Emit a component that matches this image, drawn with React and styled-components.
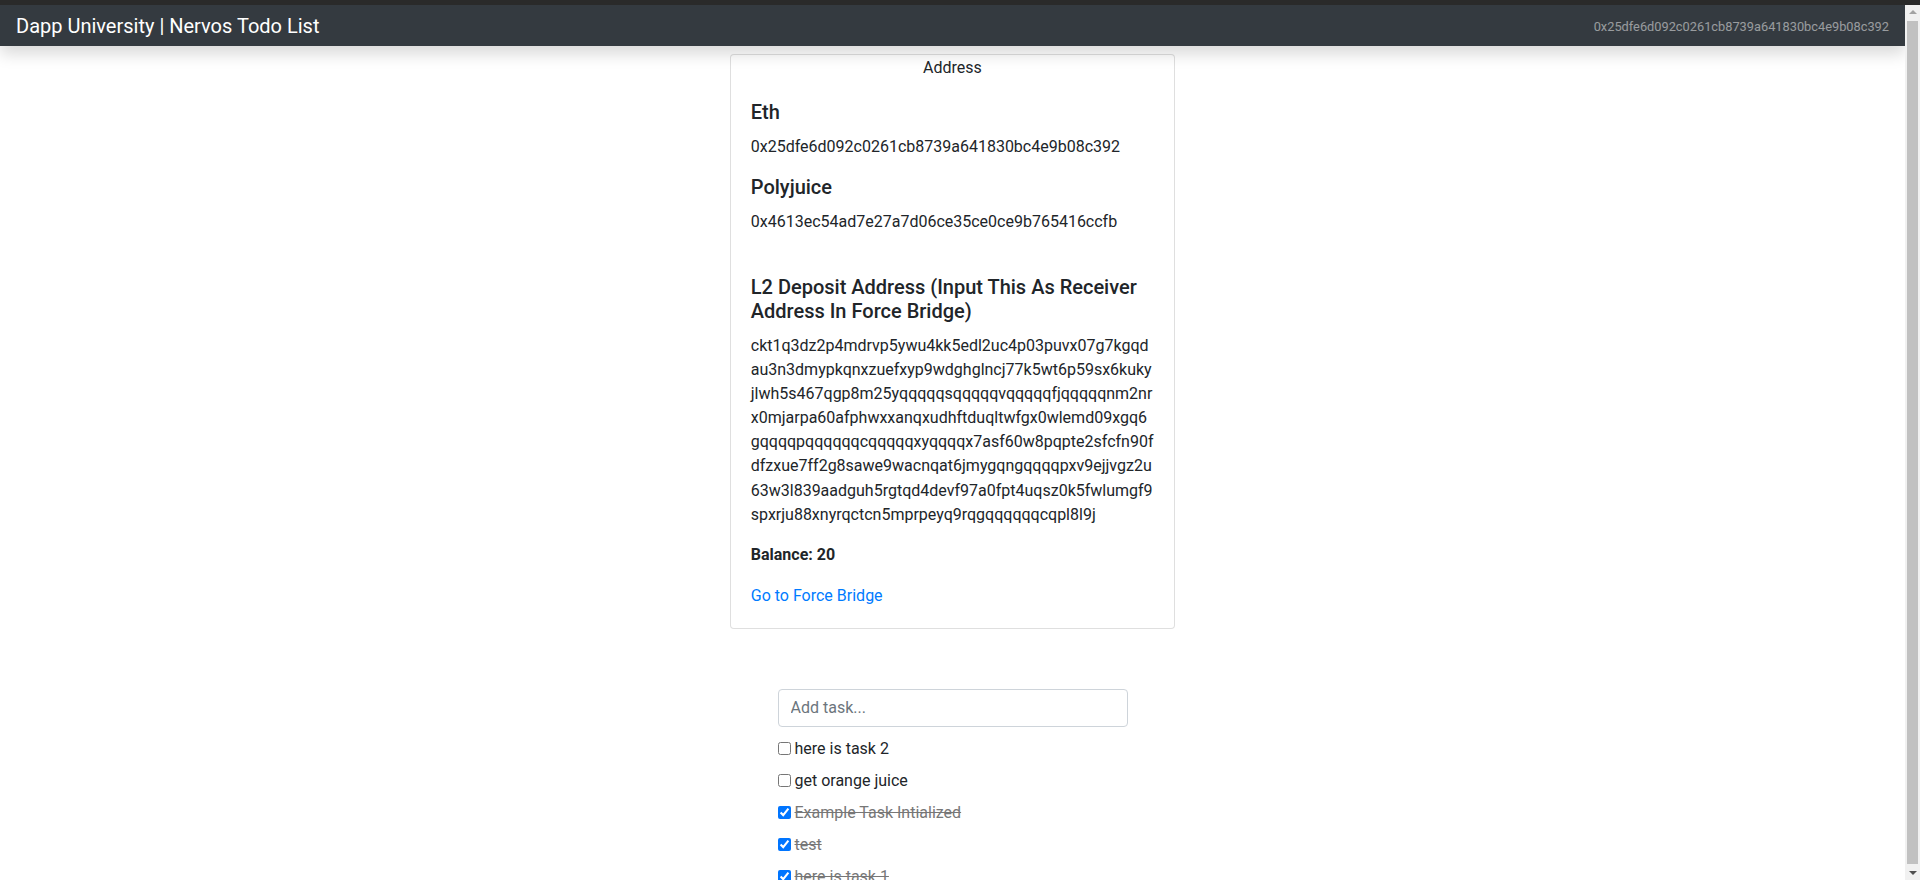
import React, { useState } from 'react'
import styled, { createGlobalStyle } from 'styled-components'

const GlobalStyle = createGlobalStyle`
  body {
    margin: 0;
    font-family: Roboto, "Liberation Sans", sans-serif;
    font-size: 16px;
    line-height: 1.5;
    color: #212529;
    background: #fff;
  }
`

const ethAddress = '0x25dfe6d092c0261cb8739a641830bc4e9b08c392'
const polyjuiceAddress = '0x4613ec54ad7e27a7d06ce35ce0ce9b765416ccfb'
const depositAddress =
  'ckt1q3dz2p4mdrvp5ywu4kk5edl2uc4p03puvx07g7kgqdau3n3dmypkqnxzuefxyp9wdghglncj77k5wt6p59sx6kukyjlwh5s467qgp8m25yqqqqqsqqqqqvqqqqqfjqqqqqnm2nrx0mjarpa60afphwxxanqxudhftduqltwfgx0wlemd09xgq6gqqqqpqqqqqqcqqqqqxyqqqqx7asf60w8pqpte2sfcfn90fdfzxue7ff2g8sawe9wacnqat6jmygqngqqqqpxv9ejjvgz2u63w3l839aadguh5rgtqd4devf97a0fpt4uqsz0k5fwlumgf9spxrju88xnyrqctcn5mprpeyq9rqgqqqqqqcqpl8l9j'

const initialTasks = [
  { id: 2, content: 'here is task 2', completed: false },
  { id: 3, content: 'get orange juice', completed: false },
  { id: 0, content: 'Example Task Intialized', completed: true },
  { id: 4, content: 'test', completed: true },
  { id: 1, content: 'here is task 1', completed: true },
]

export default function App() {
  const [tasks, setTasks] = useState(initialTasks)

  const toggle = (id) => {
    setTasks(tasks.map((t) => (t.id === id ? { ...t, completed: !t.completed } : t)))
  }

  return (
    <>
      <GlobalStyle />
      <Styled.TopStrip />
      <Styled.Page>
        <Styled.Navbar>
          <Styled.Brand>Dapp University | Nervos Todo List</Styled.Brand>
          <Styled.Account>{ethAddress}</Styled.Account>
        </Styled.Navbar>

        <Styled.Main>
          <Styled.Card>
            <Styled.CardHeader>Address</Styled.CardHeader>
            <Styled.CardBody>
              <Styled.Title>Eth</Styled.Title>
              <Styled.Text>{ethAddress}</Styled.Text>
              <Styled.Title>Polyjuice</Styled.Title>
              <Styled.Text>{polyjuiceAddress}</Styled.Text>
              <Styled.Spacer />
              <Styled.Title>L2 Deposit Address (Input This As Receiver Address In Force Bridge)</Styled.Title>
              <Styled.Text $breakAll>{depositAddress}</Styled.Text>
              <Styled.Text $bold>Balance: 20</Styled.Text>
              <Styled.Link href="#">Go to Force Bridge</Styled.Link>
            </Styled.CardBody>
          </Styled.Card>

          <Styled.TodoBox>
            <Styled.TaskInput placeholder="Add task..." />
            <Styled.TaskList>
              {tasks.map((task) => (
                <Styled.TaskRow key={task.id}>
                  <Styled.Check
                    type="checkbox"
                    checked={task.completed}
                    onChange={() => toggle(task.id)}
                  />
                  <Styled.TaskLabel $done={task.completed}>{task.content}</Styled.TaskLabel>
                </Styled.TaskRow>
              ))}
            </Styled.TaskList>
          </Styled.TodoBox>
        </Styled.Main>
      </Styled.Page>

      {/* the window's scrollbar */}
      <Styled.Scrollbar>
        <Styled.Arrow $up />
        <Styled.Thumb />
        <Styled.Arrow />
      </Styled.Scrollbar>
    </>
  )
}

const Styled = {
  TopStrip: styled.div`
    height: 5px;
    background: #2b2b2b;
  `,
  Page: styled.div`
    margin-right: 15px;
  `,
  Navbar: styled.nav`
    position: relative;
    z-index: 2;
    height: 41px;
    padding: 0 16px;
    display: flex;
    align-items: center;
    justify-content: space-between;
    background: #343a40;
    box-shadow: 0 8px 16px rgba(0, 0, 0, 0.15);
  `,
  Brand: styled.span`
    color: #fff;
    font-size: 20px;
    line-height: 24px;
  `,
  Account: styled.small`
    color: rgba(255, 255, 255, 0.5);
    font-size: 12.8px;
    padding-top: 2px;
  `,
  Main: styled.main`
    display: flex;
    flex-direction: column;
    align-items: center;
    padding-top: 8px;
    padding-bottom: 8px;
  `,
  Card: styled.div`
    width: 445.5px;
    box-sizing: border-box;
    border: 1px solid rgba(0, 0, 0, 0.125);
    border-radius: 4px;
    background: #fff;
  `,
  CardHeader: styled.div`
    text-align: center;
    line-height: 25px;
  `,
  CardBody: styled.div`
    padding: 20px;
  `,
  Title: styled.h5`
    margin: 0 0 11px;
    font-size: 20px;
    font-weight: 500;
    line-height: 24px;
  `,
  Spacer: styled.div`
    height: 25px;
  `,
  Text: styled.p`
    margin: 0 0 ${(p) => (p.$bold ? 17 : 16)}px;
    line-height: ${(p) => (p.$breakAll ? '24.1px' : '24px')};
    font-weight: ${(p) => (p.$bold ? 700 : 400)};
    word-break: ${(p) => (p.$breakAll ? 'break-all' : 'normal')};
  `,
  Link: styled.a`
    display: block;
    color: #007bff;
    text-decoration: none;
    line-height: 24px;
  `,
  TodoBox: styled.div`
    width: 350px;
    margin-top: 60px;
  `,
  TaskInput: styled.input`
    display: block;
    width: 100%;
    height: 38px;
    box-sizing: border-box;
    padding: 6px 12px;
    border: 1px solid #ced4da;
    border-radius: 4px;
    font-family: inherit;
    font-size: 16px;
    color: #495057;
    outline: none;

    &::placeholder {
      color: #6c757d;
    }
  `,
  TaskList: styled.div`
    margin-top: 10px;
  `,
  TaskRow: styled.label`
    display: flex;
    align-items: center;
    height: 24px;
    margin-bottom: 8px;
  `,
  Check: styled.input`
    width: 13px;
    height: 13px;
    margin: 0 4px 0 0;
  `,
  TaskLabel: styled.span`
    line-height: 24px;
    color: ${(p) => (p.$done ? '#777' : '#212529')};
    text-decoration: ${(p) => (p.$done ? 'line-through' : 'none')};
  `,
  Scrollbar: styled.div`
    position: fixed;
    top: 5px;
    right: 0;
    bottom: 0;
    width: 15px;
    display: flex;
    flex-direction: column;
    align-items: center;
    background: #f1f1f1;
    z-index: 10;
  `,
  Arrow: styled.div`
    width: 0;
    height: 0;
    margin: 5px 0;
    border-left: 4px solid transparent;
    border-right: 4px solid transparent;
    ${(p) =>
      p.$up
        ? 'border-bottom: 4px solid #a3a3a3;'
        : 'border-top: 4px solid #505050;'}
  `,
  Thumb: styled.div`
    flex: 1;
    width: 11px;
    margin: 2px 0;
    background: #c1c1c1;
  `,
}
